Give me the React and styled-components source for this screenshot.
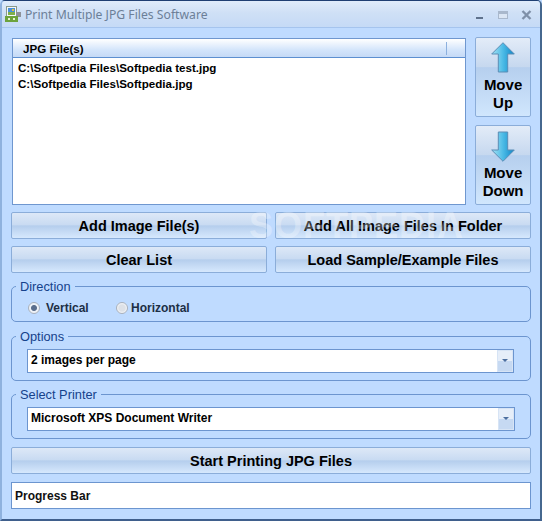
import React from "react";
import styled, { createGlobalStyle } from "styled-components";

const GlobalStyle = createGlobalStyle`
  html, body {
    margin: 0;
    padding: 0;
    background: #bfdbff;
    overflow: hidden;
  }
  * { box-sizing: border-box; }
`;

const Window = styled.div`
  position: relative;
  width: 542px;
  height: 521px;
  display: flex;
  flex-direction: column;
  background: #bfdbff;
  border-style: solid;
  border-width: 1px 2px 2px 2px;
  border-color: #1f3f73 #46688f #3f5f8c #8fb2de;
  border-radius: 5px 5px 0 0;
  font-family: "Liberation Sans", Arial, sans-serif;
  color: #000;
  overflow: hidden;
`;
const TitleBar = styled.div`
  height: 27px;
  flex: none;
  display: flex;
  align-items: center;
  padding: 1px 8px 0 3px;
  background: linear-gradient(#e0ecfb, #cfe0f6 45%, #c5daf6);
  border-bottom: 1px solid #a5c4ee;
`;
const Title = styled.span`
  margin-left: 3px;
  flex: 1;
  font-size: 12.2px;
  font-family: "Noto Sans", sans-serif;
  color: #6c7f98;
`;
const WinControls = styled.div`
  display: flex;
  align-items: center;
  gap: 13px;
`;
const Main = styled.div`
  flex: 1;
  display: flex;
  flex-direction: column;
  gap: 7px;
  padding: 9px 9px 0 9px;
`;
const TopRow = styled.div`
  display: flex;
  gap: 9px;
  height: 168px;
`;
const ListBox = styled.div`
  width: 455px;
  margin-left: 1px;
  margin-top: 1px;
  display: flex;
  flex-direction: column;
  background: #fff;
  border: 1px solid #6f97cf;
`;
const ListHeader = styled.div`
  height: 19px;
  display: flex;
  align-items: center;
  padding-left: 10px;
  font-size: 11.6px;
  font-weight: bold;
  background: linear-gradient(#ffffff, #d4e5fb 60%, #c5daf6);
  border-bottom: 1px solid #5d8fd0;
  position: relative;
`;
const HeaderDivider = styled.span`
  position: absolute;
  right: 18px;
  top: 3px;
  height: 13px;
  width: 1px;
  background: #8cb0de;
`;
const ListItem = styled.div`
  height: 16px;
  line-height: 16px;
  padding-left: 5px;
  font-size: 11.6px;
  font-weight: bold;
`;
const ListItems = styled.div`
  padding-top: 2px;
`;
const MoveColumn = styled.div`
  width: 56px;
  display: flex;
  flex-direction: column;
  gap: 8px;
`;
const GlossButton = styled.button`
  display: flex;
  align-items: center;
  justify-content: center;
  flex: ${(p) => (p.$fill ? "1" : "none")};
  height: 27px;
  padding: 0;
  font-family: "Liberation Sans", Arial, sans-serif;
  font-size: 14.5px;
  font-weight: bold;
  color: #000;
  border: 1px solid #8badd9;
  border-radius: 2px;
  background: linear-gradient(#dde8f7, #c9dbf2 46%, #b5ceed 52%, #c2d8f3 70%, #d6e8fd);
`;
const StartButton = styled(GlossButton)`
  margin-top: 1px;
`;
const MoveButton = styled(GlossButton)`
  flex-direction: column;
  justify-content: flex-start;
  height: 80px;
  padding-top: 4px;
  font-size: 15px;
  line-height: 18px;
  background: linear-gradient(#e3ecf8, #c6d8ef 37%, #b6cfee 38%, #d0e6fd);
`;
const ArrowSvg = styled.svg`
  flex: none;
  margin-bottom: 2px;
  transform: ${(p) => (p.$down ? "scaleY(-1)" : "none")};
`;
const ButtonRow = styled.div`
  display: flex;
  gap: 8px;
`;
const Group = styled.fieldset`
  margin: ${(p) => p.$top || 0}px 0 0 0;
  padding: 0;
  height: ${(p) => p.$height}px;
  border: 1px solid #6c95cf;
  border-radius: 5px;
`;
const GroupLabel = styled.legend`
  margin-left: 4px;
  padding: 1px 4px 0;
  font-size: 12.8px;
  font-weight: normal;
  color: #15428b;
  line-height: 13px;
`;
const RadioRow = styled.div`
  display: flex;
  align-items: center;
  padding: 8px 0 0 16px;
  font-size: 12px;
  font-weight: bold;
  color: #1d2f45;
`;
const RadioLabel = styled.span`
  display: flex;
  align-items: center;
  gap: ${(p) => p.$gap}px;
  width: ${(p) => p.$width}px;
`;
const Dot = styled.span`
  width: 12px;
  height: 12px;
  border-radius: 50%;
  border: 1px solid #a9b1bc;
  background: ${(p) =>
    p.$on
      ? "radial-gradient(circle, #5b6f8d 0 2.5px, #eef2f7 3.5px)"
      : "radial-gradient(circle, #dde1e7 0 3px, #f4f6f9 5px)"};
`;
const SelectBox = styled.div`
  display: flex;
  width: ${(p) => p.$width}px;
  height: 24px;
  margin: 6px 0 0 15px;
  background: #fff;
  border: 1px solid #6c95cf;
`;
const SelectText = styled.div`
  flex: 1;
  padding-left: 3px;
  line-height: 21px;
  font-size: 12px;
  font-weight: bold;
`;
const SelectArrow = styled.div`
  width: 16px;
  display: flex;
  justify-content: center;
  padding-top: 8px;
  border: 1px solid #d7e4f5;
  background: linear-gradient(#e6eef9 50%, #c6d9f2 51%);
  &::after {
    content: "";
    width: 0;
    height: 0;
    border-left: 3.5px solid transparent;
    border-right: 3.5px solid transparent;
    border-top: 3.5px solid #4d6f9f;
  }
`;
const ProgressBox = styled.div`
  height: 27px;
  margin-top: 1px;
  padding: 1px 0 0 3px;
  line-height: 25px;
  background: #fff;
  border: 1px solid #6c95cf;
  font-size: 12px;
  font-weight: bold;
  color: #111;
`;
const Watermark = styled.div`
  position: absolute;
  left: 247px;
  top: 204px;
  font-size: 36px;
  font-weight: bold;
  letter-spacing: 1px;
  color: rgba(255, 255, 255, 0.3);
  pointer-events: none;
`;

const ArrowIcon = ({ down, id }) => (
  <ArrowSvg $down={down} width="24" height="32" viewBox="0 0 24 32">
    <defs>
      <linearGradient id={id} x1="0" x2="1" y1="0" y2="0">
        <stop offset="0" stopColor="#a6e2f4" />
        <stop offset="0.5" stopColor="#4cbbe6" />
        <stop offset="1" stopColor="#0f86c8" />
      </linearGradient>
    </defs>
    <path d="M12 0.7 L23.3 12 H16.7 V30 H7.3 V12 H0.7 Z" fill={`url(#${id})`} stroke="#5b8db5" strokeWidth="1" strokeLinejoin="round" />
  </ArrowSvg>
);

const AppIcon = () => (
  <svg width="17" height="17" viewBox="0 0 17 17">
    <rect x="1.5" y="0.5" width="10" height="10" fill="#f4f7fa" stroke="#8a9a8a" />
    <rect x="3" y="2" width="7" height="7" fill="#4a90d9" />
    <rect x="3" y="6" width="7" height="3" fill="#7fb04a" />
    <rect x="7" y="3" width="2" height="2" fill="#e8c23c" />
    <rect x="11" y="6" width="5" height="5" fill="#8d9299" />
    <rect x="0" y="10" width="13" height="6" fill="#6da33c" />
    <rect x="3" y="12" width="2" height="2" fill="#e7f3d0" />
    <rect x="8" y="12" width="2" height="2" fill="#e7f3d0" />
  </svg>
);

const WinIcons = () => (
  <WinControls>
    <svg width="10" height="10" viewBox="0 0 10 10"><rect x="1" y="7" width="7" height="2" fill="#5f728c" /></svg>
    <svg width="10" height="10" viewBox="0 0 10 10"><rect x="0.5" y="1.5" width="9" height="7" fill="#dbe6f4" stroke="#a9b8cc" /><rect x="1" y="2" width="8" height="2" fill="#a9b8cc" /></svg>
    <svg width="11" height="10" viewBox="0 0 11 10"><path d="M1.5 1 L9.5 9 M9.5 1 L1.5 9" stroke="#7f90a8" strokeWidth="2.4" /></svg>
  </WinControls>
);

export default function App() {
  return (
    <>
      <GlobalStyle />
      <Window>
        <TitleBar>
          <AppIcon />
          <Title>Print Multiple JPG Files Software</Title>
          <WinIcons />
        </TitleBar>
        <Main>
          <TopRow>
            <ListBox>
              <ListHeader>
                JPG File(s)
                <HeaderDivider />
              </ListHeader>
              <ListItems>
                <ListItem>C:\Softpedia Files\Softpedia test.jpg</ListItem>
                <ListItem>C:\Softpedia Files\Softpedia.jpg</ListItem>
              </ListItems>
            </ListBox>
            <MoveColumn>
              <MoveButton>
                <ArrowIcon id="arrowUp" />
                <span>Move</span>
                <span>Up</span>
              </MoveButton>
              <MoveButton>
                <ArrowIcon down id="arrowDown" />
                <span>Move</span>
                <span>Down</span>
              </MoveButton>
            </MoveColumn>
          </TopRow>
          <ButtonRow>
            <GlossButton $fill>Add Image File(s)</GlossButton>
            <GlossButton $fill>Add All Image Files In Folder</GlossButton>
          </ButtonRow>
          <ButtonRow>
            <GlossButton $fill>Clear List</GlossButton>
            <GlossButton $fill>Load Sample/Example Files</GlossButton>
          </ButtonRow>
          <Group $height={43} $top={-1}>
            <GroupLabel>Direction</GroupLabel>
            <RadioRow>
              <RadioLabel $width={88} $gap={6}><Dot $on />Vertical</RadioLabel>
              <RadioLabel $width={90} $gap={3}><Dot />Horizontal</RadioLabel>
            </RadioRow>
          </Group>
          <Group $height={52}>
            <GroupLabel>Options</GroupLabel>
            <SelectBox $width={487}>
              <SelectText>2 images per page</SelectText>
              <SelectArrow />
            </SelectBox>
          </Group>
          <Group $height={52} $top={-1}>
            <GroupLabel>Select Printer</GroupLabel>
            <SelectBox $width={488}>
              <SelectText>Microsoft XPS Document Writer</SelectText>
              <SelectArrow />
            </SelectBox>
          </Group>
          <StartButton>Start Printing JPG Files</StartButton>
          <ProgressBox>Progress Bar</ProgressBox>
        </Main>
        <Watermark>SOFTPEDIA</Watermark>
      </Window>
    </>
  );
}
